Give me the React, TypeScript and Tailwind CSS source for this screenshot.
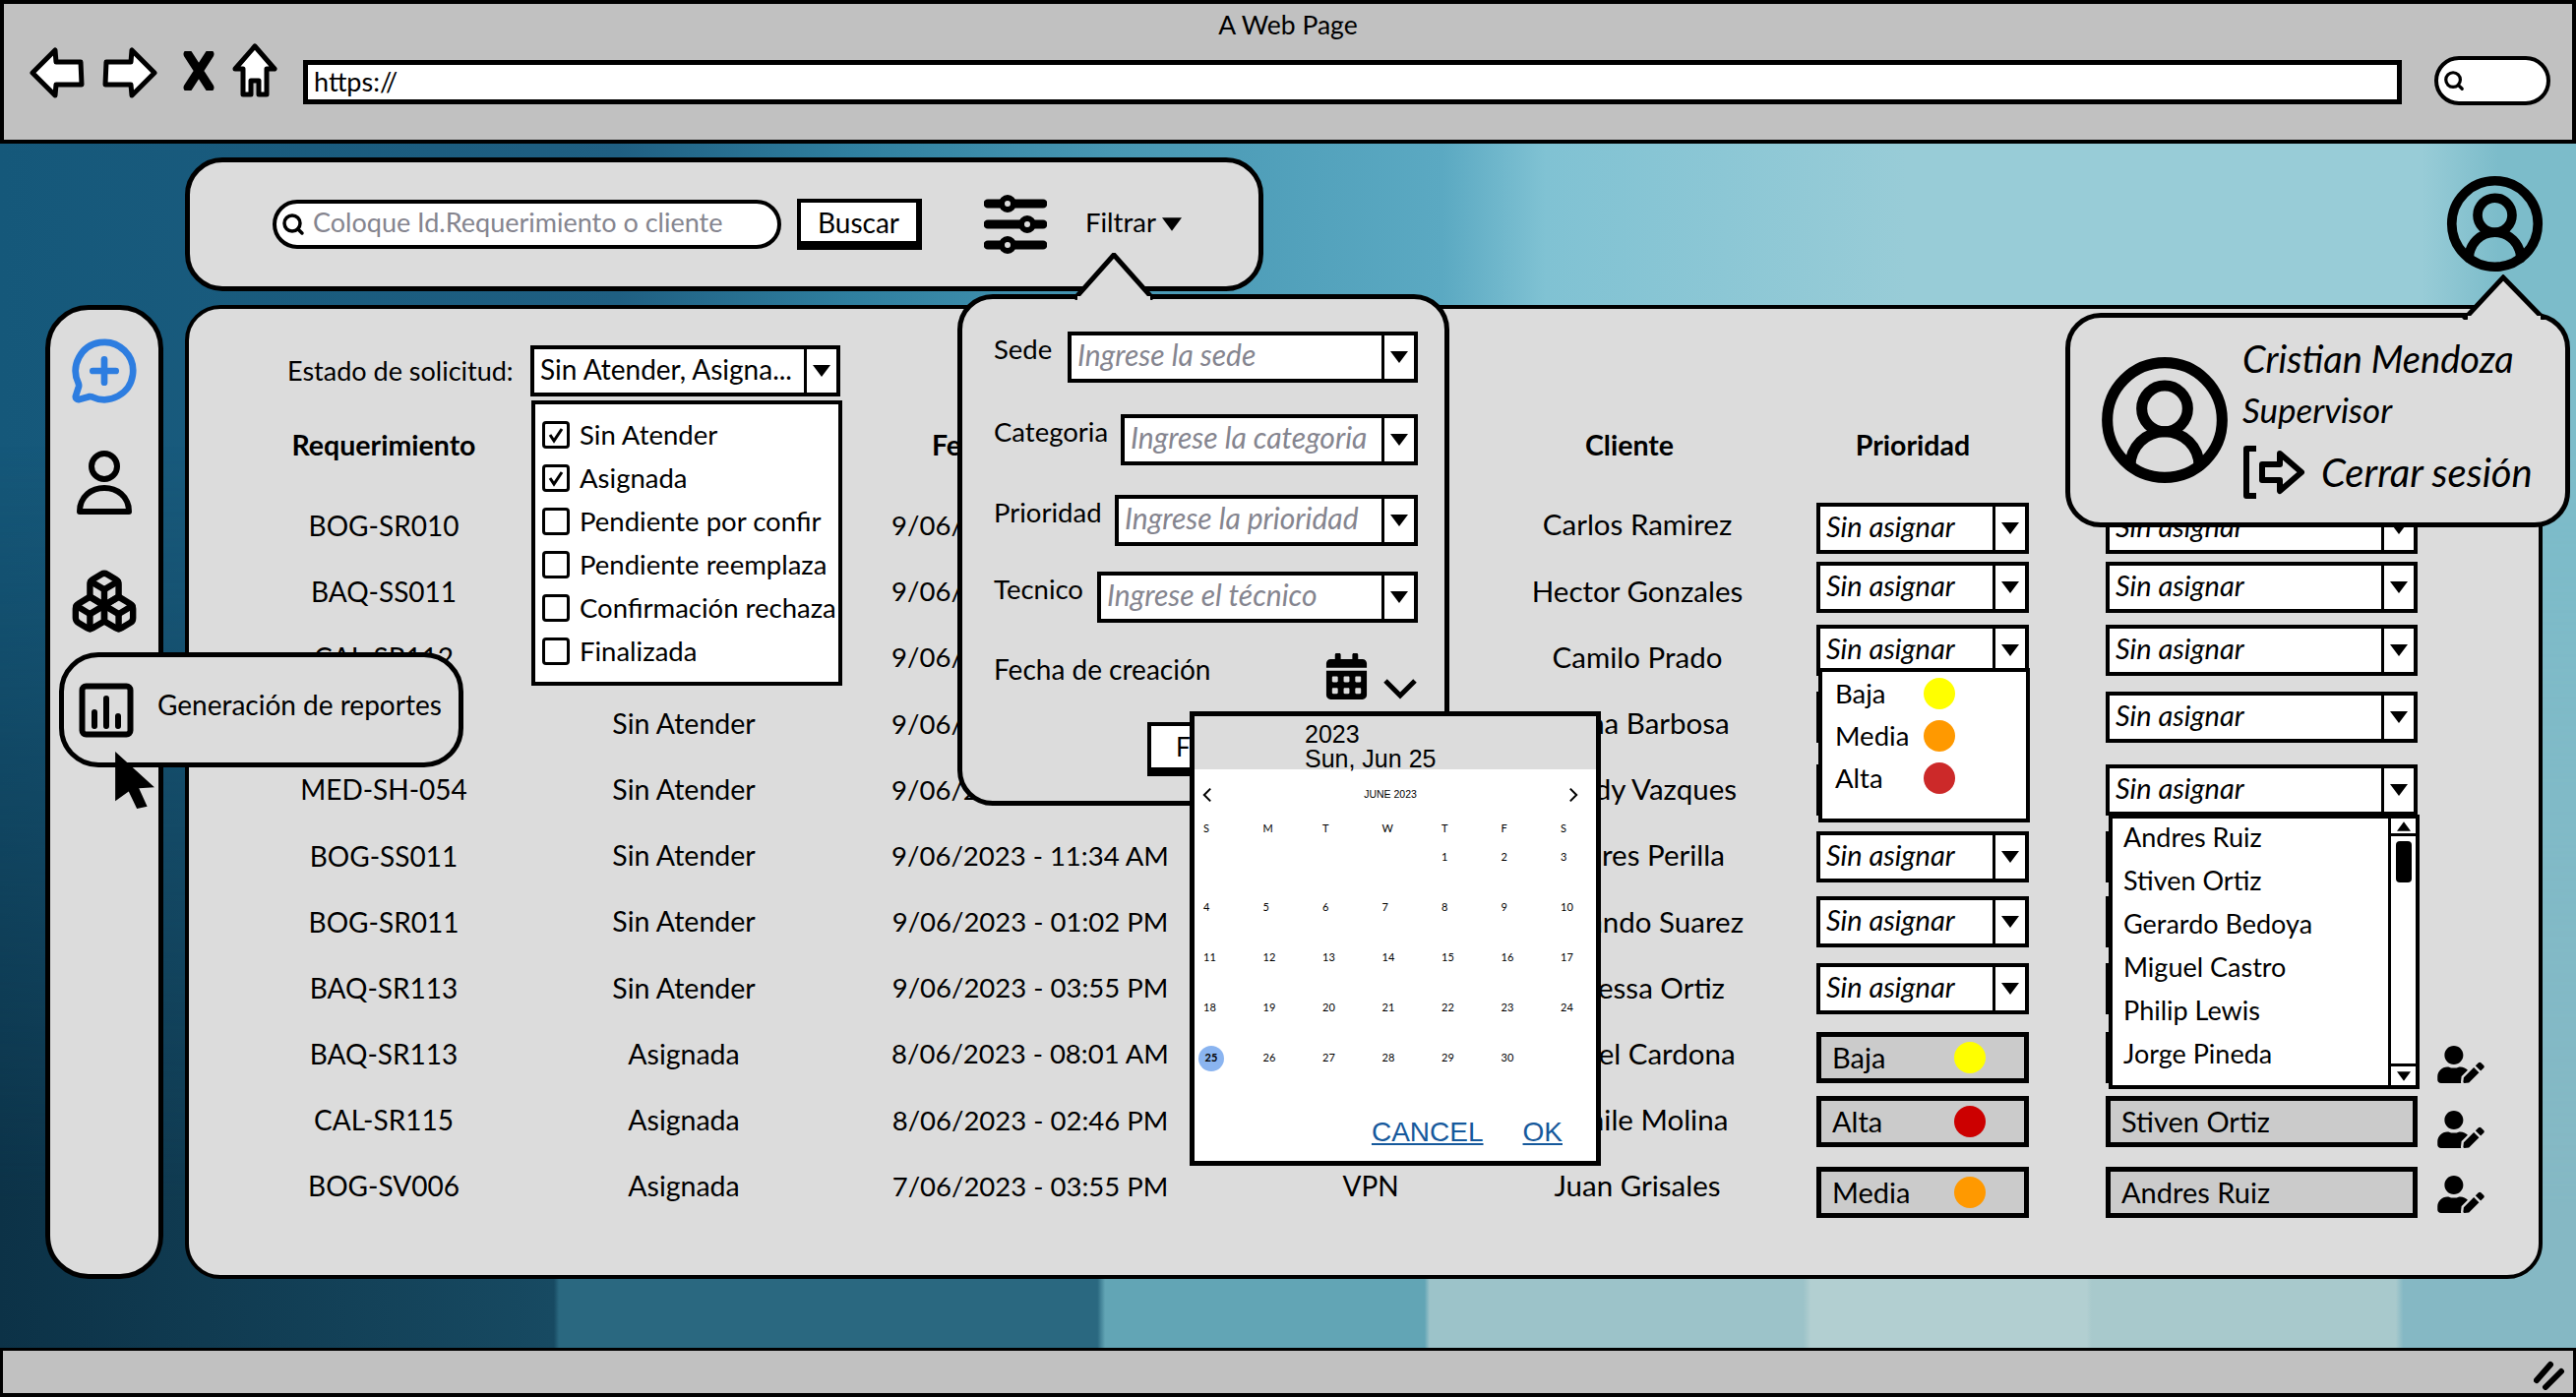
import { CircleUserRound, MessageCirclePlus, Boxes, Search } from 'lucide-react'
import { FaCalendarAlt, FaUserEdit } from 'react-icons/fa'

// cells that lie fully under a popover in the picture are left empty
const rows = [
  ['BOG-SR010', '', '9/06/2023 - 08:15 AM', '', 'Carlos Ramirez'],
  ['BAQ-SS011', '', '9/06/2023 - 08:40 AM', '', 'Hector Gonzales'],
  ['CAL-SR112', '', '9/06/2023 - 09:05 AM', '', 'Camilo Prado'],
  ['BOG-SR012', 'Sin Atender', '9/06/2023 - 09:30 AM', '', 'Diana Barbosa'],
  ['MED-SH-054', 'Sin Atender', '9/06/2023 - 10:12 AM', '', 'Freddy Vazques'],
  ['BOG-SS011', 'Sin Atender', '9/06/2023 - 11:34 AM', '', 'Andres Perilla'],
  ['BOG-SR011', 'Sin Atender', '9/06/2023 - 01:02 PM', '', 'Fernando Suarez'],
  ['BAQ-SR113', 'Sin Atender', '9/06/2023 - 03:55 PM', '', 'Vanessa Ortiz'],
  ['BAQ-SR113', 'Asignada', '8/06/2023 - 08:01 AM', '', 'Daniel Cardona'],
  ['CAL-SR115', 'Asignada', '8/06/2023 - 02:46 PM', '', 'Camile Molina'],
  ['BOG-SV006', 'Asignada', '7/06/2023 - 03:55 PM', 'VPN', 'Juan Grisales'],
]

// each field in the two right columns sits a little unevenly, as in the sketch
const fieldGaps = ['mt-[26px]', 'mt-[8px]', 'mt-[12px]', 'mt-[16px]', 'mt-[22px]', 'mt-[16px]', 'mt-[14px]', 'mt-[16px]', 'mt-[18px]', 'mt-[13px]', 'mt-[20px]']

const calendar = [
  ['', '', '', '', '1', '2', '3'],
  ['4', '5', '6', '7', '8', '9', '10'],
  ['11', '12', '13', '14', '15', '16', '17'],
  ['18', '19', '20', '21', '22', '23', '24'],
  ['25', '26', '27', '28', '29', '30', ''],
]

function Caret({ className = 'w-[18px] h-[12px]' }: { className?: string }) {
  return (
    <svg viewBox="0 0 18 12" className={className}>
      <polygon points="0,0 18,0 9,12" fill="black" />
    </svg>
  )
}

function Select({ text, className, textClass = 'italic text-[29px] text-black' }: { text: string; className: string; textClass?: string }) {
  return (
    <div className={`flex h-[52px] border-[4px] border-black bg-white ${className}`}>
      <div className={`flex-1 min-w-0 pl-[6px] pb-[5px] flex items-center whitespace-nowrap overflow-hidden ${textClass}`}>
        {text}
      </div>
      <div className="w-[33px] shrink-0 border-l-[3px] border-black flex items-center justify-center">
        <Caret />
      </div>
    </div>
  )
}

function Field({ text, dot, className }: { text: string; dot?: string; className: string }) {
  return (
    <div className={`relative h-[52px] border-[5px] border-black bg-[#cbcbcb] flex items-center pl-[11px] text-[29px] ${className}`}>
      {text}
      {dot && <span className={`absolute left-[135px] top-[5px] w-[32px] h-[32px] rounded-full ${dot}`} />}
    </div>
  )
}

function TextColumn({ width, title, titleClass = '', cellClass = 'text-[28px]', index }: { width: string; title: string; titleClass?: string; cellClass?: string; index: number }) {
  return (
    <div className={`${width} shrink-0 flex flex-col items-center`}>
      <div className={`h-[66px] mb-[15px] flex items-center font-bold whitespace-nowrap text-[28.5px] ${titleClass}`}>{title}</div>
      {rows.map((r, i) => (
        <div key={i} className={`h-[67.2px] flex items-center whitespace-nowrap ${cellClass}`}>
          {r[index]}
        </div>
      ))}
    </div>
  )
}

function BackArrow({ flip = false }: { flip?: boolean }) {
  return (
    <svg viewBox="0 0 56 52" className={`w-[56px] h-[52px] ${flip ? '-scale-x-100' : ''}`}>
      <path d="M3 26 L26 3 L27 15 L52 15 L53 38 L27 38 L26 49 Z" fill="white" stroke="black" strokeWidth="5" strokeLinejoin="round" />
    </svg>
  )
}

function CheckRow({ label, checked }: { label: string; checked?: boolean }) {
  return (
    <div className="h-[44px] flex items-center gap-[10px] whitespace-nowrap text-[27.5px]">
      <span className="w-[28px] h-[28px] border-[3px] border-black rounded-[4px] flex items-center justify-center shrink-0">
        {checked && (
          <svg viewBox="0 0 18 18" className="w-[18px] h-[18px]">
            <path d="M3 9 L7 15 L15 3" fill="none" stroke="black" strokeWidth="3" />
          </svg>
        )}
      </span>
      {label}
    </div>
  )
}

function FilterRow({ label, placeholder, width, className }: { label: string; placeholder: string; width: string; className: string }) {
  return (
    <div className={`flex items-center justify-between ${className}`}>
      <span className="-translate-y-2 text-[27.5px]">{label}</span>
      <Select text={placeholder} className={width} textClass="italic text-[30px] text-[#85858f]" />
    </div>
  )
}

export default function App() {
  return (
    <div className="relative w-[2618px] h-[1420px] overflow-hidden flex flex-col font-['Lato',sans-serif] text-black">
      {/* browser chrome */}
      <div className="h-[146px] shrink-0 bg-[#c1c1c1] border-[4px] border-black">
        <div className="h-[44px] flex items-center justify-center text-[26.5px]">A Web Page</div>
        <div className="flex items-start pl-[26px] pr-[22px]">
          <BackArrow />
          <div className="ml-[18px]"><BackArrow flip /></div>
          <svg viewBox="0 0 32 40" className="ml-[26px] mt-[4px] w-[32px] h-[40px]">
            <path d="M5 3 L27 37 M27 3 L5 37" stroke="black" strokeWidth="9" strokeLinecap="round" />
          </svg>
          <svg viewBox="0 0 46 56" className="ml-[18px] -mt-[4px] w-[46px] h-[56px]">
            <path d="M23 3 L43 26 L35 26 L35 52 L27 52 L27 38 L19 38 L19 52 L11 52 L11 26 L3 26 Z" fill="white" stroke="black" strokeWidth="5" strokeLinejoin="round" />
          </svg>
          <div className="ml-[26px] mt-[13px] flex-1 h-[45px] bg-white border-[5px] border-black flex items-center pl-[6px] text-[27px]">https://</div>
          <div className="ml-[33px] mt-[9px] w-[118px] h-[50px] bg-white border-[4px] border-black rounded-[26px] flex items-center pl-[5px]">
            <Search size={22} strokeWidth={3.5} />
          </div>
        </div>
      </div>

      {/* desktop */}
      <div className="relative flex-1 pt-[14px] pl-[46px] pr-[34px] bg-[linear-gradient(90deg,#15587a_0%,#1f5f82_24%,#2f7f9f_33%,#4797b3_43%,#5ba9c2_56%,#80c2d3_60%,#98ccd7_74%,#98ccd7_94%,#7cbcca_97%,#7cbcca_100%)]">
        <div className="absolute inset-0 [mask-image:linear-gradient(180deg,transparent_25%,black_88%)] bg-[linear-gradient(90deg,#0c3247_0%,#174a62_21.5%,#2a6880_21.7%,#2a6880_42.6%,#62a5b5_42.9%,#62a5b5_55.3%,#9cc3c9_55.5%,#9cc3c9_70%,#b2cfd1_70.3%,#b2cfd1_81%,#a8c9cc_81.2%,#a8c9cc_93%,#85b8c4_93.3%,#85b8c4_100%)]" />

        <div className="relative flex items-start justify-between">
          <div className="ml-[142px] w-[1096px] h-[136px] bg-[#dcdcdc] border-[5px] border-black rounded-[38px] flex items-center pl-[84px]">
            <div className="w-[517px] h-[50px] bg-white border-[4px] border-black rounded-[25px] flex items-center pl-[5px] pb-[4px] text-[27px] text-[#85858f] whitespace-nowrap">
              <Search size={24} strokeWidth={3.5} className="text-black mr-[8px] mt-[4px]" />
              Coloque Id.Requerimiento o cliente
            </div>
            <div className="ml-[16px] w-[127px] h-[52px] bg-white border-[4px] border-r-[6px] border-b-[9px] border-black flex items-center justify-center text-[28px]">Buscar</div>
            <svg viewBox="0 0 64 60" className="ml-[63px] w-[64px] h-[60px]">
              <g stroke="black" strokeWidth="9" strokeLinecap="round">
                <path d="M4 9 H60 M4 30 H60 M4 51 H60" />
              </g>
              <g fill="#dcdcdc" stroke="black" strokeWidth="6">
                <circle cx="24" cy="9" r="6" />
                <circle cx="44" cy="30" r="6" />
                <circle cx="24" cy="51" r="6" />
              </g>
            </svg>
            <div className="ml-[39px] pb-[4px] flex items-center gap-[6px] text-[27.5px]">Filtrar <Caret className="w-[20px] h-[16px] mt-[4px]" /></div>
          </div>
          <CircleUserRound size={105} strokeWidth={2.2} className="mt-[15px] -mr-[4px]" />
        </div>

        <div className="relative mt-[14px] flex gap-[22px] h-[990px]">
          {/* side rail */}
          <div className="w-[120px] shrink-0 bg-[#dcdcdc] border-[5px] border-black rounded-[44px] flex flex-col items-center pt-[27px]">
            <MessageCirclePlus size={70} strokeWidth={2.3} className="text-[#2d7de0]" />
            <svg viewBox="0 0 56 66" className="mt-[46px] w-[56px] h-[66px]">
              <circle cx="28" cy="16" r="13" fill="none" stroke="black" strokeWidth="6" />
              <path d="M3 62 C3 30 53 30 53 62 Z" fill="none" stroke="black" strokeWidth="6" strokeLinejoin="round" />
            </svg>
            <Boxes size={70} strokeWidth={2.2} className="mt-[52px]" />
          </div>

          {/* main panel */}
          <div className="flex-1 bg-[#dcdcdc] border-[4px] border-black rounded-[36px] pt-[37px] overflow-hidden">
            <div className="flex items-center pl-[100px]">
              <span className="w-[247px] whitespace-nowrap text-[27px]">Estado de solicitud:</span>
              <Select text="Sin Atender,  Asigna..." className="w-[315px]" textClass="text-[28px] text-black" />
            </div>
            <div className="mt-[16px] flex">
              <TextColumn width="w-[396px]" title="Requerimiento" index={0} />
              <TextColumn width="w-[214px]" title="" index={1} cellClass="text-[28.5px]" />
              <div className="w-[490px] shrink-0 flex flex-col items-center">
                <div className="self-start pl-[145px] h-[66px] mb-[15px] flex items-center font-bold whitespace-nowrap text-[28.5px]">Fecha de creación</div>
                {rows.map((r, i) => (
                  <div key={i} className="h-[67.2px] flex items-center whitespace-nowrap text-[27.5px]">{r[2]}</div>
                ))}
              </div>
              <TextColumn width="w-[202px]" title="" index={3} />
              <TextColumn width="w-[340px]" title="Cliente" titleClass="pr-[16px]" cellClass="text-[29.5px]" index={4} />

              <div className="ml-[12px] w-[216px] shrink-0 flex flex-col">
                <div className="h-[66px] pr-[20px] flex items-center justify-center font-bold text-[28.5px]">Prioridad</div>
                {fieldGaps.map((gap, i) =>
                  i < 8 ? <Select key={i} text="Sin asignar" className={gap} /> : null
                )}
                <Field text="Baja" dot="bg-[#ffff00]" className={fieldGaps[8]} />
                <Field text="Alta" dot="bg-[#cc0000]" className={fieldGaps[9]} />
                <Field text="Media" dot="bg-[#ff9900]" className={fieldGaps[10]} />
              </div>

              <div className="ml-[78px] w-[317px] shrink-0 flex flex-col">
                <div className="h-[66px]" />
                {fieldGaps.map((gap, i) =>
                  i < 8 ? <Select key={i} text="Sin asignar" className={gap} /> : null
                )}
                <Field text="" className={fieldGaps[8]} />
                <Field text="Stiven Ortiz" className={fieldGaps[9]} />
                <Field text="Andres Ruiz" className={fieldGaps[10]} />
              </div>

              <div className="ml-[19px] pt-[644px] flex flex-col gap-[28px]">
                <FaUserEdit size={38} className="w-[50px]" />
                <FaUserEdit size={38} className="w-[50px]" />
                <FaUserEdit size={38} className="w-[50px]" />
              </div>
            </div>
          </div>
        </div>
      </div>

      {/* status bar */}
      <div className="relative h-[50px] shrink-0 bg-[#c1c1c1] border-[3px] border-b-[4px] border-black">
        <svg viewBox="0 0 32 30" className="absolute right-[8px] top-[10px] w-[32px] h-[30px]">
          <path d="M3 20 L17 4 M12 27 L28 11" stroke="black" strokeWidth="6" strokeLinecap="round" />
        </svg>
      </div>

      {/* estado dropdown */}
      <div className="absolute left-[540px] top-[407px] w-[316px] h-[290px] bg-white border-[4px] border-black pl-[7px] pt-[9px]">
        <CheckRow label="Sin Atender" checked />
        <CheckRow label="Asignada" checked />
        <CheckRow label="Pendiente por confir" />
        <CheckRow label="Pendiente reemplaza" />
        <CheckRow label="Confirmación rechaza" />
        <CheckRow label="Finalizada" />
      </div>

      {/* reportes tooltip */}
      <div className="absolute left-[60px] top-[663px] w-[411px] h-[117px] bg-[#dcdcdc] border-[5px] border-black rounded-[40px] flex items-start pl-[15px] pt-[26px]">
        <svg viewBox="0 0 56 56" className="w-[56px] h-[56px]">
          <rect x="3.5" y="3.5" width="49" height="49" rx="4" fill="none" stroke="black" strokeWidth="6" />
          <path d="M16 44 V30 M28 44 V16 M40 44 V34" stroke="black" strokeWidth="6" strokeLinecap="round" />
        </svg>
        <span className="ml-[24px] mt-[1px] text-[28px] whitespace-nowrap">Generación de reportes</span>
      </div>
      <svg viewBox="0 0 42 54" className="absolute left-[114px] top-[763px] w-[44px] h-[59px]" preserveAspectRatio="none">
        <path d="M3 1 L41 34 L26 35 L34 52 L24 54 L16 38 L3 47 Z" fill="black" />
      </svg>

      {/* filtro popover */}
      <div className="absolute left-[973px] top-[299px] w-[500px] h-[520px] bg-[#dcdcdc] border-[5px] border-black rounded-[36px] pl-[32px] pr-[27px] pt-[33px]">
        <svg viewBox="0 0 80 48" className="absolute left-[114px] -top-[47px] w-[80px] h-[48px]">
          <path d="M0 47 L40 2 L80 47" fill="#dcdcdc" stroke="black" strokeWidth="5" />
          <rect x="3" y="44" width="74" height="4" fill="#dcdcdc" />
        </svg>
        <FilterRow label="Sede" placeholder="Ingrese la sede" width="w-[356px]" className="" />
        <FilterRow label="Categoria" placeholder="Ingrese la categoria" width="w-[302px]" className="mt-[32px]" />
        <FilterRow label="Prioridad" placeholder="Ingrese la prioridad" width="w-[308px]" className="mt-[30px]" />
        <FilterRow label="Tecnico" placeholder="Ingrese el técnico" width="w-[326px]" className="mt-[26px]" />
        <div className="mt-[31px] flex items-start justify-between">
          <span className="-mt-[5px] text-[28px] whitespace-nowrap">Fecha de creación</span>
          <div className="flex items-start">
            <FaCalendarAlt size={47} className="shrink-0" />
            <svg viewBox="0 0 36 22" className="ml-[13px] mt-[25px] w-[36px] h-[22px]">
              <path d="M3 3 L18 18 L33 3" fill="none" stroke="black" strokeWidth="5" />
            </svg>
          </div>
        </div>
        <div className="ml-[156px] mt-[23px] w-[130px] h-[55px] bg-white border-[4px] border-b-[9px] border-black flex items-center pl-[25px] text-[26px]">Filtrar</div>
      </div>

      {/* date picker */}
      <div className="absolute left-[1209px] top-[723px] w-[418px] h-[462px] bg-white border-[5px] border-black flex flex-col">
        <div className="h-[54px] shrink-0 bg-[#dcdcdc] pl-[112px] pt-[6px] font-['Liberation_Sans',sans-serif] text-[25px] leading-[25px]">
          <div>2023</div>
          <div>Sun, Jun 25</div>
        </div>
        <div className="shrink-0 flex items-center justify-between pl-[8px] pr-[18px] h-[52px] text-[10.5px]">
          <svg viewBox="0 0 12 20" className="w-[10px] h-[16px]"><path d="M10 2 L2 10 L10 18" fill="none" stroke="black" strokeWidth="2.5" /></svg>
          <span className="font-['Liberation_Sans',sans-serif]">JUNE 2023</span>
          <svg viewBox="0 0 12 20" className="w-[10px] h-[16px]"><path d="M2 2 L10 10 L2 18" fill="none" stroke="black" strokeWidth="2.5" /></svg>
        </div>
        <div className="shrink-0 grid grid-cols-[repeat(7,60.5px)] pl-[9px] text-[11px] h-[12px] items-center">
          {['S', 'M', 'T', 'W', 'T', 'F', 'S'].map((d, i) => (
            <span key={i}>{d}</span>
          ))}
        </div>
        {calendar.map((week, i) => (
          <div key={i} className="shrink-0 grid grid-cols-[repeat(7,60.5px)] pl-[9px] text-[11px] h-[51px] items-center">
            {week.map((d, j) =>
              d === '25' ? (
                <span key={j} className="-ml-[5px] w-[26px] h-[26px] rounded-full bg-[#8ab4f0] flex items-center justify-center font-bold">{d}</span>
              ) : (
                <span key={j}>{d}</span>
              )
            )}
          </div>
        ))}
        <div className="mt-[29px] flex justify-end gap-[40px] pr-[34px] font-['Liberation_Sans',sans-serif] text-[28px] text-[#16599c] underline underline-offset-2">
          <span>CANCEL</span>
          <span>OK</span>
        </div>
      </div>

      {/* prioridad dropdown */}
      <div className="absolute left-[1848px] top-[679px] w-[215px] h-[157px] bg-white border-[4px] border-black pl-[13px]">
        {[
          ['Baja', 'bg-[#ffff00]'],
          ['Media', 'bg-[#ff9900]'],
          ['Alta', 'bg-[#cc2929]'],
        ].map(([label, dot]) => (
          <div key={label} className="h-[43px] flex items-center text-[27.5px]">
            <span className="w-[90px]">{label}</span>
            <span className={`w-[32px] h-[32px] rounded-full ${dot}`} />
          </div>
        ))}
      </div>

      {/* tecnico dropdown */}
      <div className="absolute left-[2143px] top-[828px] w-[316px] h-[279px] bg-white border-[4px] border-black flex">
        <div className="flex-1 pl-[11px] -mt-[3px]">
          {['Andres Ruiz', 'Stiven Ortiz', 'Gerardo Bedoya', 'Miguel Castro', 'Philip Lewis', 'Jorge Pineda'].map((n) => (
            <div key={n} className="h-[44px] flex items-center text-[27px] whitespace-nowrap">{n}</div>
          ))}
        </div>
        <div className="w-[28px] border-l-[3px] border-black flex flex-col items-center">
          <div className="h-[18px] w-full border-b-[3px] border-black flex items-center justify-center"><Caret className="w-[14px] h-[10px] rotate-180" /></div>
          <div className="mt-[5px] w-[16px] h-[42px] bg-black rounded-[4px]" />
          <div className="mt-auto h-[22px] w-full border-t-[3px] border-black flex items-center justify-center"><Caret className="w-[14px] h-[10px]" /></div>
        </div>
      </div>

      {/* perfil popover */}
      <div className="absolute left-[2099px] top-[318px] w-[513px] h-[218px] bg-[#dcdcdc] border-[5px] border-black rounded-[36px] flex items-start pl-[26px] pt-[34px]">
        <svg viewBox="0 0 88 46" className="absolute left-[398px] -top-[44px] w-[88px] h-[46px]">
          <path d="M2 46 L42 3 L84 46" fill="#dcdcdc" stroke="black" strokeWidth="5" />
          <rect x="6" y="42" width="74" height="4" fill="#dcdcdc" />
        </svg>
        <CircleUserRound size={140} strokeWidth={1.9} className="shrink-0" />
        <div className="ml-[9px] -mt-[19px] flex flex-col italic">
          <span className="text-[38px] leading-[52px] whitespace-nowrap">Cristian Mendoza</span>
          <span className="text-[35px] leading-[52px]">Supervisor</span>
          <div className="mt-[10px] flex items-center">
            <svg viewBox="0 0 64 56" className="w-[64px] h-[56px]">
              <path d="M14 4 H4 V52 H14" fill="none" stroke="black" strokeWidth="6" strokeLinejoin="round" />
              <path d="M20 20 H38 V9 L60 28 L38 47 V36 H20 Z" fill="none" stroke="black" strokeWidth="6" strokeLinejoin="round" />
            </svg>
            <span className="ml-[16px] text-[40px] leading-[50px] whitespace-nowrap">Cerrar sesión</span>
          </div>
        </div>
      </div>
    </div>
  )
}
